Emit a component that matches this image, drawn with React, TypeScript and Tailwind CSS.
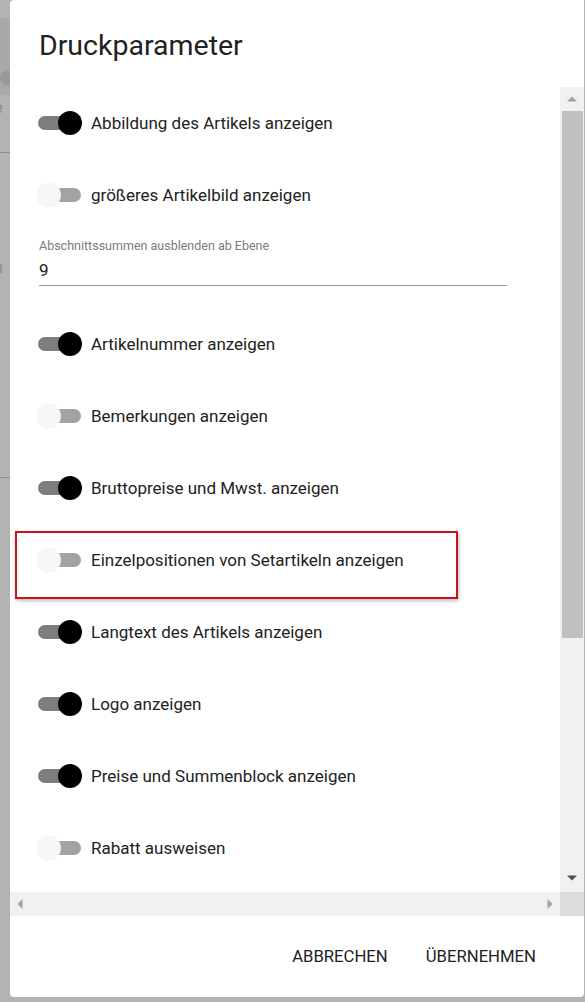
import React from "react";

const font = { fontFamily: "Roboto, 'Noto Sans', sans-serif" };

function Toggle({ on }: { on: boolean }) {
  return (
    <div className="relative w-[44px] h-[24px] shrink-0">
      <div
        className={`absolute left-0 top-[5px] w-[43px] h-[14px] rounded-full ${
          on ? "bg-[#7d7d7d]" : "bg-[#a3a3a3]"
        }`}
      />
      <div
        className={`absolute top-0 w-[24px] h-[24px] rounded-full ${
          on ? "left-[20px] bg-black" : "left-[-1px] bg-[#f6f6f6] shadow-[0_0_1px_rgba(0,0,0,0.08)]"
        }`}
      />
    </div>
  );
}

function Row({ on, label, marked }: { on: boolean; label: string; marked?: boolean }) {
  return (
    <div className="relative h-[72px] flex items-center pl-[28px] gap-[9px]">
      <Toggle on={on} />
      <span className="text-[17px] text-[#222] leading-none">{label}</span>
      {marked && (
        <div className="absolute left-[5px] top-[7px] w-[443px] h-[68px] border-2 border-[#d0101a] shadow-[1px_2px_3px_rgba(0,0,0,0.25)]" />
      )}
    </div>
  );
}

export default function App() {
  return (
    <div className="w-[585px] h-[1002px] bg-[#b3b3b3] flex overflow-hidden" style={font}>
      {/* dimmed underlying page */}
      <div className="w-[10px] shrink-0 flex flex-col overflow-hidden text-[#8a8a8a]">
        <div className="h-[18px]" />
        <div className="h-[77px] bg-[#a9a9a9] flex items-end">
          <div className="w-[10px] h-[14px] rounded-l-full bg-[#999] mb-[10px]" />
        </div>
        <div className="h-[26px] text-[16px] leading-[26px] -ml-[6px]">e</div>
        <div className="h-[32px] border-b border-[#8e8e8e]" />
        <div className="h-[145px] flex items-end text-[16px] leading-[24px] -ml-[6px] pb-[18px]">n</div>
        <div className="h-[180px] border-b border-[#8e8e8e]" />
      </div>

      {/* dialog */}
      <div className="w-[574px] h-[997px] bg-white rounded-b-[4px] rounded-tl-[4px] flex flex-col shrink-0">
        <div className="h-[87px] pl-[29px] pt-[29px]">
          <h1 className="text-[28.5px] leading-[34px] text-[#222] font-normal">Druckparameter</h1>
        </div>

        <div className="flex h-[805px]">
          <div className="w-[550px] flex flex-col">
            <Row on label="Abbildung des Artikels anzeigen" />
            <Row on={false} label="größeres Artikelbild anzeigen" />
            <div className="h-[77px] pl-[29px] pt-[8px]">
              <div className="text-[12.5px] leading-[14px] text-[#7a7a7a]">Abschnittssummen ausblenden ab Ebene</div>
              <div className="w-[468px] h-[33px] border-b border-[#9a9a9a] text-[17px] leading-[24px] pt-[5px] text-[#222]">
                9
              </div>
            </div>
            <Row on label="Artikelnummer anzeigen" />
            <Row on={false} label="Bemerkungen anzeigen" />
            <Row on label="Bruttopreise und Mwst. anzeigen" />
            <Row on={false} label="Einzelpositionen von Setartikeln anzeigen" marked />
            <Row on label="Langtext des Artikels anzeigen" />
            <Row on label="Logo anzeigen" />
            <Row on label="Preise und Summenblock anzeigen" />
            <Row on={false} label="Rabatt ausweisen" />
          </div>
          {/* vertical scrollbar */}
          <div className="w-[24px] bg-[#f1f1f1] flex flex-col items-center">
            <div className="h-[24px] flex items-center justify-center">
              <svg width="12" height="8" viewBox="0 0 12 8"><path d="M1 6.5 L6 1.5 L11 6.5 Z" fill="#a3a3a3" /></svg>
            </div>
            <div className="w-[21px] h-[527px] bg-[#c1c1c1]" />
            <div className="flex-1" />
            <div className="h-[24px] flex items-center justify-center pb-[4px]">
              <svg width="12" height="8" viewBox="0 0 12 8"><path d="M1 1.5 L6 6.5 L11 1.5 Z" fill="#505050" /></svg>
            </div>
          </div>
        </div>

        {/* horizontal scrollbar */}
        <div className="flex h-[24px]">
          <div className="w-[550px] bg-[#f1f1f1] flex items-center justify-between px-[6px]">
            <svg width="8" height="12" viewBox="0 0 8 12"><path d="M6.5 1 L1.5 6 L6.5 11 Z" fill="#a3a3a3" /></svg>
            <svg width="8" height="12" viewBox="0 0 8 12"><path d="M1.5 1 L6.5 6 L1.5 11 Z" fill="#a3a3a3" /></svg>
          </div>
          <div className="w-[24px] bg-[#dcdcdc]" />
        </div>

        {/* actions */}
        <div className="flex-1 flex items-center justify-end pr-[48px] gap-[38px] text-[16.7px] text-[#222] uppercase">
          <span>Abbrechen</span>
          <span>Übernehmen</span>
        </div>
      </div>
    </div>
  );
}
